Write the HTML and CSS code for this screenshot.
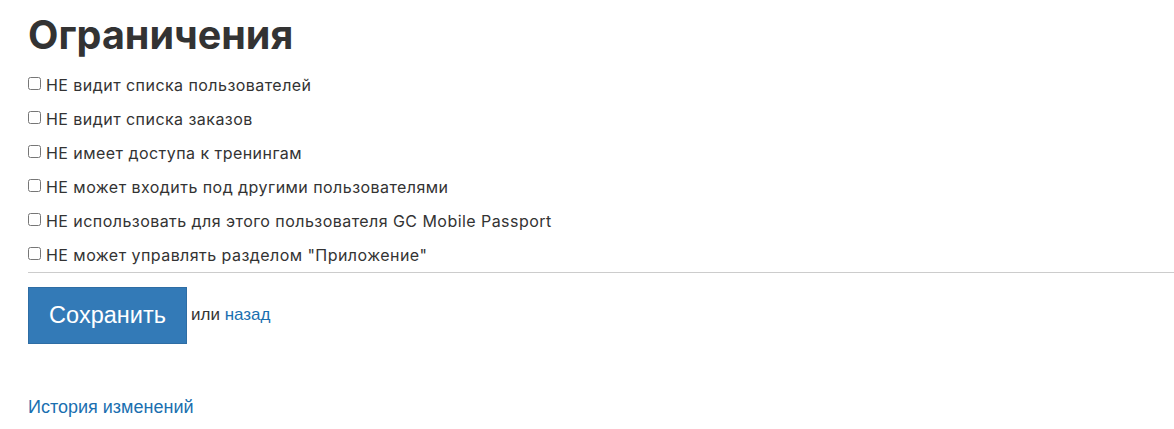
FILE: index.html
```html
<!DOCTYPE html>
<html lang="ru">
<head>
<meta charset="utf-8">
<link rel="stylesheet" href="styles.css">
</head>
<body>
<div class="page">
  <h1 class="title">Ограничения</h1>
  <div class="options">
    <label class="opt"><input type="checkbox"> НЕ видит списка пользователей</label>
    <label class="opt"><input type="checkbox"> НЕ видит списка заказов</label>
    <label class="opt"><input type="checkbox"> НЕ имеет доступа к тренингам</label>
    <label class="opt"><input type="checkbox"> НЕ может входить под другими пользователями</label>
    <label class="opt"><input type="checkbox"> НЕ использовать для этого пользователя GC Mobile Passport</label>
    <label class="opt"><input type="checkbox"> НЕ может управлять разделом "Приложение"</label>
  </div>
  <div class="rule"></div>
  <div class="actions">
    <button class="save" type="button">Сохранить</button>
    <span class="or">или <a class="link" href="#">назад</a></span>
  </div>
  <a class="history" href="#">История изменений</a>
</div>
</body>
</html>
```

FILE: styles.css
```css
html, body {
  margin: 0;
  padding: 0;
  background: #fff;
}
.page {
  padding: 10px 0 0 28px;
  font-family: Inter, "Noto Sans", sans-serif;
  color: #333;
}
.title {
  margin: 0 0 8px;
  font-size: 39.5px;
  font-weight: 700;
  line-height: 50px;
  color: #333;
}
.options {
  display: flex;
  flex-direction: column;
}
.opt {
  display: flex;
  align-items: center;
  height: 34px;
  font-size: 16px;
  letter-spacing: 0.45px;
  color: #333;
}
.opt input {
  margin: 0 5px 0 0;
  width: 13px;
  height: 13px;
  position: relative;
  top: -2px;
}
.rule {
  border-top: 1px solid #ccc;
  margin-top: 0;
}
.actions {
  display: flex;
  align-items: center;
  margin-top: 14px;
}
.save {
  width: 159px;
  height: 57px;
  background: #337ab7;
  border: 1px solid #2e6da4;
  color: #fff;
  font-family: "Liberation Sans", Arial, sans-serif;
  font-size: 23.5px;
  padding: 0;
  margin-right: 4px;
}
.or {
  font-family: "Liberation Sans", Arial, sans-serif;
  font-size: 17px;
  color: #333;
  position: relative;
  top: -1px;
}
.link, .history {
  color: #1a6fb0;
  text-decoration: none;
}
.history {
  display: inline-block;
  margin-top: 53px;
  font-family: "Liberation Sans", Arial, sans-serif;
  font-size: 18px;
}
```
